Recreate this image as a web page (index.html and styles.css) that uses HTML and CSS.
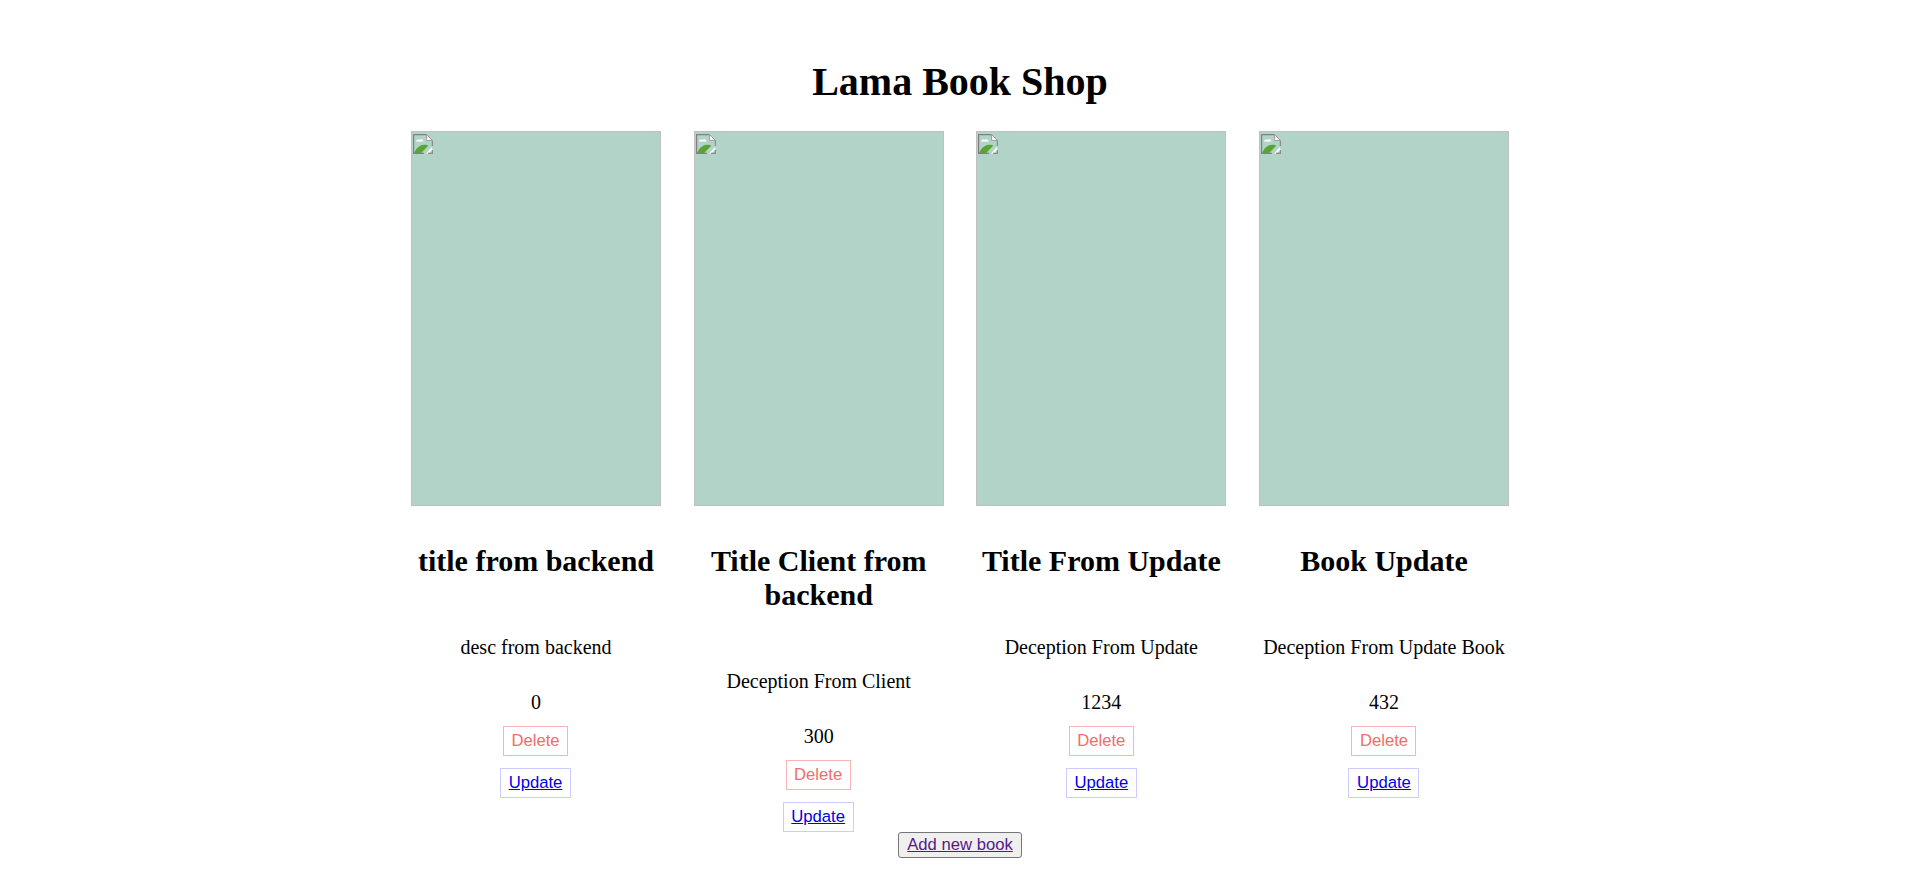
FILE: index.html
```html
<!DOCTYPE html>
<html lang="en">
<head>
<meta charset="utf-8">
<title>Lama Book Shop</title>
<link rel="stylesheet" href="styles.css">
</head>
<body>
<svg class="defs" aria-hidden="true">
  <defs>
    <linearGradient id="sky" x1="0" y1="0" x2="0" y2="1"><stop offset="0" stop-color="#a9c4f2"/><stop offset="1" stop-color="#e4ecfb"/></linearGradient>
    <symbol id="broken-image" viewBox="0 0 20 20">
      <path d="M.6.6H13.6L19.4 6.4V14.5L14.5 19.4H.6z" fill="url(#sky)"/>
      <path d="M3 7.5c.5-2 2.500-2.500 3.500-1.500 1-1.200 3.500-1 4 1.500z" fill="#fff"/>
      <path d="M1.200 19c1.500-4.200 5-7.800 9.800-8.200 1.800-.1 3.200.4 4.200 1l-7 7.200z" fill="#58a52f"/>
      <path d="M19 13l-6 6.400h2.500L19.400 15.500z" fill="#fff"/>
      <path d="M13.600.6H.6V19.400H11" fill="none" stroke="#808080" stroke-width="1.200"/>
      <path d="M13.600.6V6.400H19.400L13.600.6z" fill="#fff" stroke="#9a9a9a" stroke-width="1"/>
      <path d="M19.400 6.400V12M15 19.400H19.400V16" fill="none" stroke="#8c8c8c" stroke-width="1.200"/>
    </symbol>
  </defs>
</svg>
<div class="app">
  <h1 class="shop-title">Lama Book Shop</h1>
  <div class="books">
    <div class="book">
      <div class="cover"><svg class="broken"><use href="#broken-image"/></svg></div>
      <h2 class="book-title">title from backend</h2>
      <p class="desc">desc from backend</p>
      <span class="price">0</span>
      <button class="delete">Delete</button>
      <button class="update"><a href="#">Update</a></button>
    </div>
    <div class="book">
      <div class="cover"><svg class="broken"><use href="#broken-image"/></svg></div>
      <h2 class="book-title">Title Client from backend</h2>
      <p class="desc">Deception From Client</p>
      <span class="price">300</span>
      <button class="delete">Delete</button>
      <button class="update"><a href="#">Update</a></button>
    </div>
    <div class="book">
      <div class="cover"><svg class="broken"><use href="#broken-image"/></svg></div>
      <h2 class="book-title">Title From Update</h2>
      <p class="desc">Deception From Update</p>
      <span class="price">1234</span>
      <button class="delete">Delete</button>
      <button class="update"><a href="#">Update</a></button>
    </div>
    <div class="book">
      <div class="cover"><svg class="broken"><use href="#broken-image"/></svg></div>
      <h2 class="book-title">Book Update</h2>
      <p class="desc">Deception From Update Book</p>
      <span class="price">432</span>
      <button class="delete">Delete</button>
      <button class="update"><a href="#">Update</a></button>
    </div>
  </div>
  <button class="add"><a href="#">Add new book</a></button>
</div>
</body>
</html>
```
FILE: styles.css
```css
html, body { margin: 0; padding: 0; background: #fff; }
body { font-family: "Liberation Serif", serif; font-size: 20px; color: #000; }
.defs { display: none; }
.app { height: 888px; overflow: hidden; padding-top: 59px; box-sizing: border-box; text-align: center; }
.shop-title { font-size: 40px; line-height: 46px; margin: 0 0 26px; font-weight: 700; }
.books { display: flex; justify-content: space-between; width: 1098px; margin: 0 auto; }
.book { width: 250px; display: flex; flex-direction: column; align-items: center; }
.cover { width: 250px; height: 375px; box-sizing: border-box; background: #b2d4c8; border: 1px solid #c0c0c0; }
.broken { display: block; width: 20px; height: 20px; margin: 2px 0 0 1px; }
.book-title { font-size: 30px; line-height: 34px; margin: 38px 0 58px; font-weight: 700; }
.desc { margin: 0 0 32px; line-height: 23px; }
.price { line-height: 23px; margin-bottom: 12px; }
.delete, .update { font-family: "Liberation Sans", sans-serif; font-size: 16.67px; background: #fff; height: 30px; box-sizing: border-box; padding: 0; margin-right: 1px; }
.book:nth-child(n+3) .delete, .book:nth-child(n+3) .update { margin-right: 0; }
.delete { width: 65px; color: #f56b6b; border: 1px solid #fbb4b4; margin-bottom: 12px; }
.update { width: 71px; border: 1px solid #ccccff; }
.update a { color: #0000ee; }
.add { display: block; margin: 0 auto; width: 124px; height: 26px; padding: 0; box-sizing: border-box; background: #efefef; border: 1px solid #767676; border-radius: 3px; font-family: "Liberation Sans", sans-serif; font-size: 16.67px; }
.add a { color: #551a8b; }
```
